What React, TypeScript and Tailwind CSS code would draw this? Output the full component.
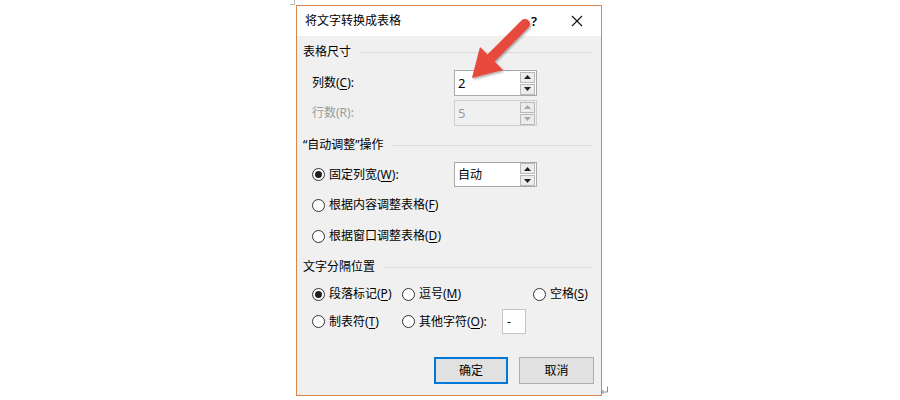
import React from "react"

const font = { fontFamily: '"Noto Sans", "Noto Sans CJK SC", sans-serif' }

function Mn({ children }: { children: React.ReactNode }) {
	return <span className="underline underline-offset-2">{children}</span>
}

function SpinBtn({ up, disabled }: { up?: boolean; disabled?: boolean }) {
	return (
		<div className="flex h-[11px] w-[15px] items-center justify-center border border-[#b9b9b9] bg-[#ececec]">
			<svg width="7" height="4" viewBox="0 0 7 4">
				<path
					d={up ? "M0 4 L3.5 0 L7 4 Z" : "M0 0 L3.5 4 L7 0 Z"}
					fill={disabled ? "#a8a8a8" : "#202020"}
				/>
			</svg>
		</div>
	)
}

function Spinner({ value, disabled }: { value: string; disabled?: boolean }) {
	return (
		<div
			className={`flex h-[26px] w-[83px] items-center border ${
				disabled ? "border-[#cfcfcf] bg-[#f0f0f0] text-[#9a9a9a]" : "border-[#a9a9a9] bg-white text-black"
			}`}
		>
			<span className="flex-1 pl-[3px] text-[13px] leading-none">{value}</span>
			<div className="mr-[1px] flex flex-col gap-[1px]">
				<SpinBtn up disabled={disabled} />
				<SpinBtn disabled={disabled} />
			</div>
		</div>
	)
}

function Radio({ checked }: { checked?: boolean }) {
	return (
		<div className="flex h-[13px] w-[13px] shrink-0 items-center justify-center rounded-full border border-[#333333] bg-white">
			{checked && <div className="h-[7px] w-[7px] rounded-full bg-[#222222]" />}
		</div>
	)
}

function Section({ title }: { title: string }) {
	return (
		<div className="flex h-4 items-center gap-2 pl-[6px] pr-[8px]">
			<span className="text-[12px] leading-none">{title}</span>
			<div className="h-px flex-1 bg-[#dcdcdc]" />
		</div>
	)
}

function Arrow() {
	return (
		<svg className="absolute left-0 top-0" width="900" height="400" viewBox="0 0 900 400">
			<defs>
				<filter id="sh" x="-20%" y="-20%" width="140%" height="140%">
					<feDropShadow dx="1" dy="1.5" stdDeviation="1.2" floodColor="#000" floodOpacity="0.35" />
				</filter>
			</defs>
			<g filter="url(#sh)">
				<line x1="525" y1="24" x2="490" y2="59" stroke="#e8483e" strokeWidth="10" strokeLinecap="round" />
				<polygon points="472,78 480,47 503,70" fill="#e8483e" />
			</g>
		</svg>
	)
}

export default function App() {
	return (
		<div className="relative h-[400px] w-[900px] bg-white text-black" style={font}>
			{/* word 文档角标 */}
			<div className="absolute left-[290px] top-0 h-[5px] w-[5px] border-b border-r border-[#bdbdbd]" />
			<div className="ml-[296px] pt-[5px]">
				<div className="flex h-[391px] w-[306px] flex-col border border-[#d98550] bg-[#f0f0f0]">
					{/* 标题栏 */}
					<div className="flex h-[30px] items-center bg-white pl-[8px]">
						<span className="flex-1 text-[12px]">将文字转换成表格</span>
						<span className="mr-[34px] text-[13px] font-semibold leading-none">?</span>
						<svg className="mr-[18px]" width="12" height="12" viewBox="0 0 12 12">
							<path d="M1 1 L11 11 M11 1 L1 11" stroke="#111" strokeWidth="1.1" />
						</svg>
					</div>

					<div className="flex flex-col text-[12px]">
						<div className="mt-[8px]">
							<Section title="表格尺寸" />
						</div>
						<div className="mt-[10px] flex h-[26px] items-center pl-[15px]">
							<span className="w-[142px]">
								列数(<Mn>C</Mn>):
							</span>
							<Spinner value="2" />
						</div>
						<div className="mt-[4px] flex h-[26px] items-center pl-[15px]">
							<span className="w-[142px] text-[#9a9a9a]">行数(R):</span>
							<Spinner value="5" disabled />
						</div>

						<div className="mt-[11px]">
							<Section title="“自动调整”操作" />
						</div>
						<div className="mt-[9px] flex h-[25px] items-center pl-[15px]">
							<Radio checked />
							<span className="ml-[4px] w-[125px]">
								固定列宽(<Mn>W</Mn>):
							</span>
							<div className="flex h-[25px] w-[83px] items-center border border-[#a9a9a9] bg-white">
								<span className="flex-1 pl-[3px] leading-none">自动</span>
								<div className="mr-[1px] flex flex-col gap-[1px]">
									<SpinBtn up />
									<SpinBtn />
								</div>
							</div>
						</div>
						<div className="mt-[5px] flex h-[26px] items-center pl-[15px]">
							<Radio />
							<span className="ml-[4px]">
								根据内容调整表格(<Mn>F</Mn>)
							</span>
						</div>
						<div className="mt-[5px] flex h-[26px] items-center pl-[15px]">
							<Radio />
							<span className="ml-[4px]">
								根据窗口调整表格(<Mn>D</Mn>)
							</span>
						</div>

						<div className="mt-[10px]">
							<Section title="文字分隔位置" />
						</div>
						<div className="mt-[6px] flex h-[26px] items-center pl-[15px]">
							<div className="flex w-[90px] items-center">
								<Radio checked />
								<span className="ml-[4px]">
									段落标记(<Mn>P</Mn>)
								</span>
							</div>
							<div className="flex w-[131px] items-center">
								<Radio />
								<span className="ml-[4px]">
									逗号(<Mn>M</Mn>)
								</span>
							</div>
							<div className="flex items-center">
								<Radio />
								<span className="ml-[4px]">
									空格(<Mn>S</Mn>)
								</span>
							</div>
						</div>
						<div className="mt-[2px] flex h-[25px] items-center pl-[15px]">
							<div className="flex w-[90px] items-center">
								<Radio />
								<span className="ml-[4px]">
									制表符(<Mn>T</Mn>)
								</span>
							</div>
							<div className="flex w-[100px] items-center">
								<Radio />
								<span className="ml-[4px]">
									其他字符(<Mn>O</Mn>):
								</span>
							</div>
							<div className="flex h-[25px] w-[24px] items-center border border-[#c4c4c4] bg-white pl-[4px] leading-none">
								-
							</div>
						</div>

						<div className="mt-[23px] flex justify-end gap-[11px] pr-[7px]">
							<button className="h-[27px] w-[74px] border-2 border-[#0078d7] bg-[#e1e1e1] text-[12px]">
								确定
							</button>
							<button className="h-[27px] w-[75px] border border-[#adadad] bg-[#e1e1e1] text-[12px]">
								取消
							</button>
						</div>
					</div>
				</div>
			</div>
			{/* 段落标记 */}
			<svg className="absolute left-[600px] top-[386px]" width="9" height="9" viewBox="0 0 9 9">
				<path d="M7.5 0.5 V6 H1.5 M3.5 4 L1.5 6 L3.5 8" stroke="#8a8a8a" strokeWidth="1" fill="none" />
			</svg>
			<Arrow />
		</div>
	)
}
